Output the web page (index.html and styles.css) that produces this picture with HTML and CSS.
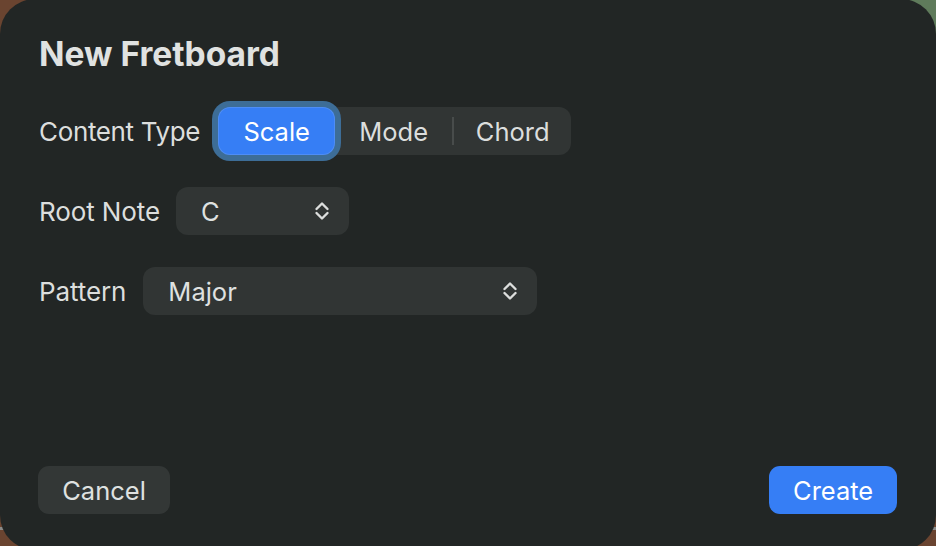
FILE: index.html
```html
<!DOCTYPE html>
<html>
<head>
<meta charset="utf-8">
<link rel="stylesheet" href="styles.css">
</head>
<body>
<div class="sheet">
  <h1 class="title">New Fretboard</h1>
  <div class="form">
    <div class="row">
      <span class="label label-tight">Content Type</span>
      <div class="segmented">
        <span class="seg seg-active">Scale</span>
        <span class="seg">Mode</span>
        <span class="seg-divider"></span>
        <span class="seg">Chord</span>
      </div>
    </div>
    <div class="row">
      <span class="label">Root Note</span>
      <div class="popup popup-root">
        <span class="popup-value">C</span>
        <svg class="chevrons" width="16" height="22" viewBox="0 0 16 22"><polyline points="2.5,9 8,3.5 13.5,9"/><polyline points="2.5,13 8,18.5 13.5,13"/></svg>
      </div>
    </div>
    <div class="row">
      <span class="label">Pattern</span>
      <div class="popup popup-pattern">
        <span class="popup-value">Major</span>
        <svg class="chevrons" width="16" height="22" viewBox="0 0 16 22"><polyline points="2.5,9 8,3.5 13.5,9"/><polyline points="2.5,13 8,18.5 13.5,13"/></svg>
      </div>
    </div>
  </div>
  <div class="spacer"></div>
  <div class="footer">
    <button class="btn btn-cancel">Cancel</button>
    <button class="btn btn-create">Create</button>
  </div>
</div>
</body>
</html>
```

FILE: styles.css
```css
html, body {
  margin: 0;
  padding: 0;
  width: 936px;
  height: 546px;
  overflow: hidden;
}
body {
  background:
    radial-gradient(circle at 100% 0, #5f7b5b 0 70px, transparent 71px),
    linear-gradient(to bottom, transparent 527px, #8a8a88 527px 530px, transparent 530px),
    #6a4430;
  font-family: Inter, "Noto Sans", sans-serif;
  color: #dfe1e0;
}
.sheet {
  box-sizing: border-box;
  width: 936px;
  height: 551px;
  margin-top: -1px;
  border-radius: 35px;
  background: #222625;
  padding: 0 39px 36px 39px;
  display: flex;
  flex-direction: column;
}
.title {
  margin: 33px 0 0 0;
  font-size: 33.5px;
  line-height: 44px;
  font-weight: 700;
  color: #e0e2e1;
}
.form {
  margin-top: 31px;
  display: flex;
  flex-direction: column;
  gap: 32px;
}
.row {
  display: flex;
  align-items: center;
  height: 48px;
}
.label {
  font-size: 26px;
  color: #dcdedd;
  margin-right: 17px;
  letter-spacing: -0.1px;
}
.label-tight {
  letter-spacing: -0.35px;
}
.segmented {
  display: flex;
  align-items: center;
  height: 48px;
  background: #313534;
  border-radius: 12px;
  margin-left: 1px;
}
.seg {
  width: 117px;
  height: 48px;
  display: flex;
  align-items: center;
  justify-content: center;
  font-size: 25.5px;
  color: #dcdedd;
}
.seg-active {
  background: #367ef5;
  color: #ffffff;
  border-radius: 12px;
  box-shadow: inset 0 0 0 1px rgba(255,255,255,0.12), 0 0 0 6px #3d6d97;
}
.seg-divider {
  width: 2px;
  height: 28px;
  background: #484c4b;
}
.popup {
  box-sizing: border-box;
  height: 48px;
  background: #313534;
  border-radius: 12px;
  display: flex;
  align-items: center;
  justify-content: space-between;
  padding: 0 19px 0 25px;
}
.popup-root { width: 173px; margin-left: -1px; }
.popup-pattern { width: 394px; }
.popup-value {
  font-size: 25.5px;
  color: #dfe1e0;
}
.chevrons polyline {
  fill: none;
  stroke: #dcdedd;
  stroke-width: 2.4;
  stroke-linecap: round;
  stroke-linejoin: round;
}
.spacer { flex: 1; }
.footer {
  display: flex;
  justify-content: space-between;
  align-items: center;
}
.btn {
  height: 48px;
  border: none;
  border-radius: 11px;
  font-family: Inter, "Noto Sans", sans-serif;
  font-size: 25.5px;
  padding: 0 24px;
}
.btn-cancel {
  background: #333736;
  color: #dfe1e0;
  width: 132px;
  margin-left: -1px;
}
.btn-create {
  background: #367ef5;
  color: #ffffff;
  width: 128px;
}
```
